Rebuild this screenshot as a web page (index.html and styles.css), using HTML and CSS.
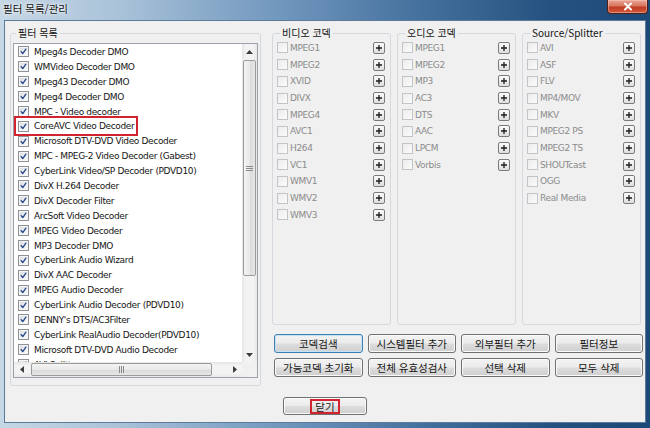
FILE: index.html
```html
<!DOCTYPE html>
<html lang="ko">
<head>
<meta charset="utf-8">
<title>필터 목록/관리</title>
<link rel="stylesheet" href="styles.css">
</head>
<body>
<div class="window">
  <div class="titlebar">
    <span class="title">필터 목록/관리</span>
    <span class="close-x"><svg width="12" height="9" viewBox="0 0 12 9"><path d="M3 1.5 L9 7.5 M9 1.5 L3 7.5" stroke="#fff" stroke-width="2" fill="none" stroke-linecap="round"/></svg></span>
  </div>
  <div class="client">
    <div class="main">
      <fieldset class="group filters">
        <legend>필터 목록</legend>
        <div class="listbox">
          <div class="viewport">
            <div class="item"><span class="cb on"><svg viewBox="0 0 11 11"><path d="M2.6 5.6 L4.6 8 L8.4 2.6"/></svg></span><span>Mpeg4s Decoder DMO</span></div>
            <div class="item"><span class="cb on"><svg viewBox="0 0 11 11"><path d="M2.6 5.6 L4.6 8 L8.4 2.6"/></svg></span><span>WMVideo Decoder DMO</span></div>
            <div class="item"><span class="cb on"><svg viewBox="0 0 11 11"><path d="M2.6 5.6 L4.6 8 L8.4 2.6"/></svg></span><span>Mpeg43 Decoder DMO</span></div>
            <div class="item"><span class="cb on"><svg viewBox="0 0 11 11"><path d="M2.6 5.6 L4.6 8 L8.4 2.6"/></svg></span><span>Mpeg4 Decoder DMO</span></div>
            <div class="item"><span class="cb on"><svg viewBox="0 0 11 11"><path d="M2.6 5.6 L4.6 8 L8.4 2.6"/></svg></span><span>MPC - Video decoder</span></div>
            <div class="item"><span class="mark"><span class="cb on"><svg viewBox="0 0 11 11"><path d="M2.6 5.6 L4.6 8 L8.4 2.6"/></svg></span><span>CoreAVC Video Decoder</span></span></div>
            <div class="item"><span class="cb on"><svg viewBox="0 0 11 11"><path d="M2.6 5.6 L4.6 8 L8.4 2.6"/></svg></span><span>Microsoft DTV-DVD Video Decoder</span></div>
            <div class="item"><span class="cb on"><svg viewBox="0 0 11 11"><path d="M2.6 5.6 L4.6 8 L8.4 2.6"/></svg></span><span>MPC - MPEG-2 Video Decoder (Gabest)</span></div>
            <div class="item"><span class="cb on"><svg viewBox="0 0 11 11"><path d="M2.6 5.6 L4.6 8 L8.4 2.6"/></svg></span><span>CyberLink Video/SP Decoder (PDVD10)</span></div>
            <div class="item"><span class="cb on"><svg viewBox="0 0 11 11"><path d="M2.6 5.6 L4.6 8 L8.4 2.6"/></svg></span><span>DivX H.264 Decoder</span></div>
            <div class="item"><span class="cb on"><svg viewBox="0 0 11 11"><path d="M2.6 5.6 L4.6 8 L8.4 2.6"/></svg></span><span>DivX Decoder Filter</span></div>
            <div class="item"><span class="cb on"><svg viewBox="0 0 11 11"><path d="M2.6 5.6 L4.6 8 L8.4 2.6"/></svg></span><span>ArcSoft Video Decoder</span></div>
            <div class="item"><span class="cb on"><svg viewBox="0 0 11 11"><path d="M2.6 5.6 L4.6 8 L8.4 2.6"/></svg></span><span>MPEG Video Decoder</span></div>
            <div class="item"><span class="cb on"><svg viewBox="0 0 11 11"><path d="M2.6 5.6 L4.6 8 L8.4 2.6"/></svg></span><span>MP3 Decoder DMO</span></div>
            <div class="item"><span class="cb on"><svg viewBox="0 0 11 11"><path d="M2.6 5.6 L4.6 8 L8.4 2.6"/></svg></span><span>CyberLink Audio Wizard</span></div>
            <div class="item"><span class="cb on"><svg viewBox="0 0 11 11"><path d="M2.6 5.6 L4.6 8 L8.4 2.6"/></svg></span><span>DivX AAC Decoder</span></div>
            <div class="item"><span class="cb on"><svg viewBox="0 0 11 11"><path d="M2.6 5.6 L4.6 8 L8.4 2.6"/></svg></span><span>MPEG Audio Decoder</span></div>
            <div class="item"><span class="cb on"><svg viewBox="0 0 11 11"><path d="M2.6 5.6 L4.6 8 L8.4 2.6"/></svg></span><span>CyberLink Audio Decoder (PDVD10)</span></div>
            <div class="item"><span class="cb on"><svg viewBox="0 0 11 11"><path d="M2.6 5.6 L4.6 8 L8.4 2.6"/></svg></span><span>DENNY's DTS/AC3Filter</span></div>
            <div class="item"><span class="cb on"><svg viewBox="0 0 11 11"><path d="M2.6 5.6 L4.6 8 L8.4 2.6"/></svg></span><span>CyberLink RealAudio Decoder(PDVD10)</span></div>
            <div class="item"><span class="cb on"><svg viewBox="0 0 11 11"><path d="M2.6 5.6 L4.6 8 L8.4 2.6"/></svg></span><span>Microsoft DTV-DVD Audio Decoder</span></div>
            <div class="item"><span class="cb on"><svg viewBox="0 0 11 11"><path d="M2.6 5.6 L4.6 8 L8.4 2.6"/></svg></span><span>AVI Splitter</span></div>
          </div>
          <div class="vscroll">
            <span class="sarrow"><svg width="7" height="4" viewBox="0 0 7 4"><path d="M0 4 L3.5 0 L7 4Z" fill="#3d3d3d"/></svg></span>
            <span class="vtrack"><span class="vthumb"><svg width="7" height="5" viewBox="0 0 7 5"><path d="M0 0.5h7M0 2.5h7M0 4.5h7" stroke="#8a8a8a" stroke-width="1"/></svg></span></span>
            <span class="sarrow"><svg width="7" height="4" viewBox="0 0 7 4"><path d="M0 0 L3.5 4 L7 0Z" fill="#3d3d3d"/></svg></span>
          </div>
          <div class="hscroll">
            <span class="sarrow"><svg width="4" height="7" viewBox="0 0 4 7"><path d="M4 0 L0 3.5 L4 7Z" fill="#3d3d3d"/></svg></span>
            <span class="htrack"><span class="hthumb"><svg width="5" height="7" viewBox="0 0 5 7"><path d="M0.5 0v7M2.5 0v7M4.5 0v7" stroke="#8a8a8a" stroke-width="1"/></svg></span></span>
            <span class="sarrow"><svg width="4" height="7" viewBox="0 0 4 7"><path d="M0 0 L4 3.5 L0 7Z" fill="#3d3d3d"/></svg></span>
          </div>
          <div class="corner"></div>
        </div>
      </fieldset>

      <div class="right">
        <div class="codecs">
          <fieldset class="group codec">
            <legend>비디오 코덱</legend>
            <div class="crow"><span class="cb dis"></span><span class="ctext">MPEG1</span><span class="plus"><svg viewBox="0 0 10 10"><path d="M5 2v6M2 5h6"/></svg></span></div>
            <div class="crow"><span class="cb dis"></span><span class="ctext">MPEG2</span><span class="plus"><svg viewBox="0 0 10 10"><path d="M5 2v6M2 5h6"/></svg></span></div>
            <div class="crow"><span class="cb dis"></span><span class="ctext">XVID</span><span class="plus"><svg viewBox="0 0 10 10"><path d="M5 2v6M2 5h6"/></svg></span></div>
            <div class="crow"><span class="cb dis"></span><span class="ctext">DIVX</span><span class="plus"><svg viewBox="0 0 10 10"><path d="M5 2v6M2 5h6"/></svg></span></div>
            <div class="crow"><span class="cb dis"></span><span class="ctext">MPEG4</span><span class="plus"><svg viewBox="0 0 10 10"><path d="M5 2v6M2 5h6"/></svg></span></div>
            <div class="crow"><span class="cb dis"></span><span class="ctext">AVC1</span><span class="plus"><svg viewBox="0 0 10 10"><path d="M5 2v6M2 5h6"/></svg></span></div>
            <div class="crow"><span class="cb dis"></span><span class="ctext">H264</span><span class="plus"><svg viewBox="0 0 10 10"><path d="M5 2v6M2 5h6"/></svg></span></div>
            <div class="crow"><span class="cb dis"></span><span class="ctext">VC1</span><span class="plus"><svg viewBox="0 0 10 10"><path d="M5 2v6M2 5h6"/></svg></span></div>
            <div class="crow"><span class="cb dis"></span><span class="ctext">WMV1</span><span class="plus"><svg viewBox="0 0 10 10"><path d="M5 2v6M2 5h6"/></svg></span></div>
            <div class="crow"><span class="cb dis"></span><span class="ctext">WMV2</span><span class="plus"><svg viewBox="0 0 10 10"><path d="M5 2v6M2 5h6"/></svg></span></div>
            <div class="crow"><span class="cb dis"></span><span class="ctext">WMV3</span><span class="plus"><svg viewBox="0 0 10 10"><path d="M5 2v6M2 5h6"/></svg></span></div>
          </fieldset>
          <fieldset class="group codec">
            <legend>오디오 코덱</legend>
            <div class="crow"><span class="cb dis"></span><span class="ctext">MPEG1</span><span class="plus"><svg viewBox="0 0 10 10"><path d="M5 2v6M2 5h6"/></svg></span></div>
            <div class="crow"><span class="cb dis"></span><span class="ctext">MPEG2</span><span class="plus"><svg viewBox="0 0 10 10"><path d="M5 2v6M2 5h6"/></svg></span></div>
            <div class="crow"><span class="cb dis"></span><span class="ctext">MP3</span><span class="plus"><svg viewBox="0 0 10 10"><path d="M5 2v6M2 5h6"/></svg></span></div>
            <div class="crow"><span class="cb dis"></span><span class="ctext">AC3</span><span class="plus"><svg viewBox="0 0 10 10"><path d="M5 2v6M2 5h6"/></svg></span></div>
            <div class="crow"><span class="cb dis"></span><span class="ctext">DTS</span><span class="plus"><svg viewBox="0 0 10 10"><path d="M5 2v6M2 5h6"/></svg></span></div>
            <div class="crow"><span class="cb dis"></span><span class="ctext">AAC</span><span class="plus"><svg viewBox="0 0 10 10"><path d="M5 2v6M2 5h6"/></svg></span></div>
            <div class="crow"><span class="cb dis"></span><span class="ctext">LPCM</span><span class="plus"><svg viewBox="0 0 10 10"><path d="M5 2v6M2 5h6"/></svg></span></div>
            <div class="crow"><span class="cb dis"></span><span class="ctext">Vorbis</span><span class="plus"><svg viewBox="0 0 10 10"><path d="M5 2v6M2 5h6"/></svg></span></div>
          </fieldset>
          <fieldset class="group codec">
            <legend>Source/Splitter</legend>
            <div class="crow"><span class="cb dis"></span><span class="ctext">AVI</span><span class="plus"><svg viewBox="0 0 10 10"><path d="M5 2v6M2 5h6"/></svg></span></div>
            <div class="crow"><span class="cb dis"></span><span class="ctext">ASF</span><span class="plus"><svg viewBox="0 0 10 10"><path d="M5 2v6M2 5h6"/></svg></span></div>
            <div class="crow"><span class="cb dis"></span><span class="ctext">FLV</span><span class="plus"><svg viewBox="0 0 10 10"><path d="M5 2v6M2 5h6"/></svg></span></div>
            <div class="crow"><span class="cb dis"></span><span class="ctext">MP4/MOV</span><span class="plus"><svg viewBox="0 0 10 10"><path d="M5 2v6M2 5h6"/></svg></span></div>
            <div class="crow"><span class="cb dis"></span><span class="ctext">MKV</span><span class="plus"><svg viewBox="0 0 10 10"><path d="M5 2v6M2 5h6"/></svg></span></div>
            <div class="crow"><span class="cb dis"></span><span class="ctext">MPEG2 PS</span><span class="plus"><svg viewBox="0 0 10 10"><path d="M5 2v6M2 5h6"/></svg></span></div>
            <div class="crow"><span class="cb dis"></span><span class="ctext">MPEG2 TS</span><span class="plus"><svg viewBox="0 0 10 10"><path d="M5 2v6M2 5h6"/></svg></span></div>
            <div class="crow"><span class="cb dis"></span><span class="ctext">SHOUTcast</span><span class="plus"><svg viewBox="0 0 10 10"><path d="M5 2v6M2 5h6"/></svg></span></div>
            <div class="crow"><span class="cb dis"></span><span class="ctext">OGG</span><span class="plus"><svg viewBox="0 0 10 10"><path d="M5 2v6M2 5h6"/></svg></span></div>
            <div class="crow"><span class="cb dis"></span><span class="ctext">Real Media</span><span class="plus"><svg viewBox="0 0 10 10"><path d="M5 2v6M2 5h6"/></svg></span></div>
          </fieldset>
        </div>
        <div class="buttons">
          <span class="btn default">코덱검색</span>
          <span class="btn">시스템필터 추가</span>
          <span class="btn">외부필터 추가</span>
          <span class="btn">필터정보</span>
          <span class="btn">가능코덱 초기화</span>
          <span class="btn">전체 유효성검사</span>
          <span class="btn">선택 삭제</span>
          <span class="btn">모두 삭제</span>
        </div>
      </div>
    </div>
    <div class="footer">
      <span class="btn closebtn"><span class="redbox">닫기</span></span>
    </div>
  </div>
</div>
</body>
</html>
```

FILE: styles.css
```css
* { box-sizing: border-box; }
html, body { margin: 0; padding: 0; }
body {
  width: 650px;
  height: 428px;
  overflow: hidden;
  font-family: "DejaVu Sans", sans-serif;
  background: #2a5480;
}

.window {
  width: 650px;
  height: 428px;
  display: flex;
  flex-direction: column;
  background: linear-gradient(90deg, #c6d7e5 0%, #aac3d9 18%, #7399bf 42%, #44709d 65%, #24517f 85%, #1c4977 100%);
}

/* title bar */
.titlebar {
  height: 20px;
  display: flex;
  justify-content: space-between;
  align-items: flex-start;
}
.title {
  padding-left: 3px;
  font-family: "Noto Sans CJK KR", sans-serif;
  font-size: 10.5px;
  line-height: 17px;
  color: #101010;
  text-shadow: 0 0 5px rgba(255,255,255,0.95), 0 0 2px rgba(255,255,255,0.9);
}
.close-x {
  width: 41px;
  height: 14px;
  margin-right: 2px;
  border: 1px solid #4d1f1a;
  border-top: none;
  border-radius: 0 0 4px 4px;
  background: linear-gradient(180deg, #e9a593 0%, #d87560 45%, #c23b22 55%, #cf5a3c 100%);
  box-shadow: inset 0 0 0 1px rgba(255,210,200,0.45);
  display: flex;
  align-items: center;
  justify-content: center;
}

/* client area */
.client {
  flex: 1;
  margin: 0 4px 5px 4px;
  background: #f0f0f0;
  border: 1px solid #5c7b9a;
  display: flex;
  flex-direction: column;
}
.main {
  display: flex;
  align-items: flex-start;
  padding: 6px 0 0 5px;
}

/* group boxes */
.group {
  margin: 0;
  padding: 0;
  min-width: 0;
  border: 1px solid #d3d9de;
  border-radius: 3px;
}
.group legend {
  margin-left: 3px;
  padding: 0 2px;
  font-family: "Noto Sans CJK KR", sans-serif;
  font-size: 10px;
  line-height: 12px;
  color: #141414;
}

.filters {
  width: 251px;
  padding: 4px 2px 7px 2px;
}

/* list box */
.listbox {
  height: 335px;
  border: 1px solid #9ba2aa;
  background: #fff;
  display: grid;
  grid-template-columns: 1fr 15px;
  grid-template-rows: 1fr 15px;
}
.viewport {
  overflow: hidden;
  padding: 0.5px 0 0 4px;
}
.item {
  height: 14.9px;
  display: flex;
  align-items: center;
  gap: 5px;
  font-size: 9px;
  letter-spacing: -0.35px;
  color: #151515;
  white-space: nowrap;
}
.mark {
  display: inline-flex;
  align-items: center;
  gap: 5px;
  height: 12px;
  outline: 2px solid #d2232f;
  outline-offset: 2px;
}

/* checkboxes */
.cb {
  flex: none;
  width: 11px;
  height: 11px;
  border: 1px solid #8e9196;
  background: linear-gradient(135deg, #d7dade 0%, #eef0f2 55%, #fbfbfb 100%);
  box-shadow: inset 0 0 0 1px #f6f6f6;
  display: inline-flex;
}
.cb svg {
  width: 9px;
  height: 9px;
  fill: none;
  stroke: #2c4c8c;
  stroke-width: 1.7;
  stroke-linecap: round;
  stroke-linejoin: round;
}
.cb.dis {
  border-color: #c2c4c7;
  background: linear-gradient(135deg, #ececec, #fbfbfb);
  box-shadow: none;
}

/* scrollbars */
.vscroll {
  display: flex;
  flex-direction: column;
  background: linear-gradient(90deg, #e6e6e6 0%, #f3f3f3 25%, #f3f3f3 75%, #e8e8e8 100%);
}
.hscroll {
  display: flex;
  background: linear-gradient(180deg, #e6e6e6 0%, #f3f3f3 25%, #f3f3f3 75%, #e8e8e8 100%);
}
.corner { background: #f0f0f0; }
.sarrow {
  flex: none;
  width: 15px;
  height: 15px;
  display: flex;
  align-items: center;
  justify-content: center;
}
.vtrack {
  flex: 1;
  display: flex;
  flex-direction: column;
  padding: 1px 1px 0 1px;
}
.vthumb {
  height: 216px;
  border: 1px solid #9b9b9b;
  border-radius: 2px;
  background: linear-gradient(90deg, #f4f4f4 0%, #e9e9e9 50%, #dadada 51%, #e6e6e6 100%);
  display: flex;
  align-items: center;
  justify-content: center;
}
.htrack {
  flex: 1;
  display: flex;
  padding: 1px 0 1px 2px;
}
.hthumb {
  width: 181px;
  border: 1px solid #9b9b9b;
  border-radius: 2px;
  background: linear-gradient(180deg, #f4f4f4 0%, #e9e9e9 50%, #dadada 51%, #e6e6e6 100%);
  display: flex;
  align-items: center;
  justify-content: center;
}

/* right column */
.right {
  margin-left: 11px;
  width: 373px;
}
.codecs {
  display: flex;
  gap: 6px;
  height: 298px;
}
.codec {
  width: 119px;
  padding: 0.6px 5px 0 4px;
}
.crow {
  height: 16.7px;
  display: flex;
  align-items: center;
}
.ctext {
  flex: 1;
  margin-left: 2px;
  font-size: 9px;
  letter-spacing: -0.35px;
  color: #8b8b8b;
  white-space: nowrap;
}
.plus {
  flex: none;
  width: 12px;
  height: 12px;
  border: 1px solid #7b7b7b;
  border-radius: 2px;
  background: linear-gradient(180deg, #fbfbfb 0%, #ededed 50%, #dedede 100%);
  display: flex;
}
.plus svg {
  width: 10px;
  height: 10px;
  stroke: #1c1c1c;
  stroke-width: 1.3;
  fill: none;
}

/* buttons */
.buttons {
  margin: 9px 0 0 2px;
  display: grid;
  grid-template-columns: repeat(4, 88.5px);
  grid-auto-rows: 19px;
  gap: 5px;
}
.btn {
  display: flex;
  align-items: center;
  justify-content: center;
  border: 1px solid #707070;
  border-radius: 3px;
  background: linear-gradient(180deg, #f3f3f3 0%, #ebebeb 48%, #dddddd 52%, #cfcfcf 100%);
  box-shadow: inset 0 0 0 1px #fbfbfb;
  font-family: "Noto Sans CJK KR", sans-serif;
  font-size: 10.5px;
  line-height: 12px;
  color: #151515;
  white-space: nowrap;
}
.btn.default {
  border-color: #3c7fb1;
  box-shadow: inset 0 0 0 1px #c4e3f6;
}

.footer {
  margin-top: 11px;
  display: flex;
  justify-content: center;
}
.closebtn {
  width: 84px;
  height: 18px;
}
.redbox {
  border: 2px solid #d2232f;
  padding: 0 3px;
  line-height: 11px;
}
```
